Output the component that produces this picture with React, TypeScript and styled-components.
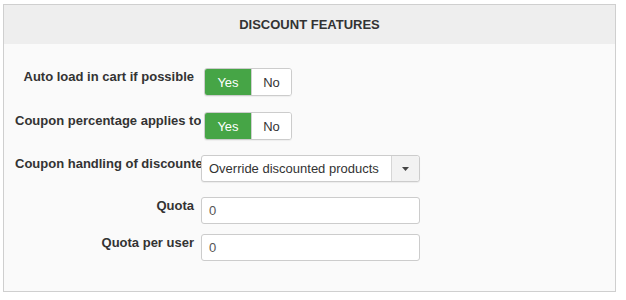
import React from "react";
import styled, { createGlobalStyle } from "styled-components";

const GlobalStyle = createGlobalStyle`
  html, body {
    margin: 0;
    padding: 0;
    background: #ffffff;
  }
  body {
    font-family: "Liberation Sans", Arial, sans-serif;
    font-size: 13px;
    color: #333333;
  }
`;

type Field =
  | { kind: "toggle"; label: string; value: boolean; gap: number }
  | { kind: "select"; label: string; value: string; gap: number }
  | { kind: "input"; label: string; value: string; gap: number };

const fields: Field[] = [
  { kind: "toggle", label: "Auto load in cart if possible", value: true, gap: 16 },
  { kind: "toggle", label: "Coupon percentage applies to", value: true, gap: 15 },
  { kind: "select", label: "Coupon handling of discounted products", value: "Override discounted products", gap: 15 },
  { kind: "input", label: "Quota", value: "0", gap: 10 },
  { kind: "input", label: "Quota per user", value: "0", gap: 0 }
];

const Toggle = ({ value }: { value: boolean }) => (
  <ToggleGroup>
    <ToggleBtn active={value} variant="yes">Yes</ToggleBtn>
    <ToggleBtn active={!value} variant="no">No</ToggleBtn>
  </ToggleGroup>
);

const Select = ({ value }: { value: string }) => (
  <SelectBox>
    <SelectText>{value}</SelectText>
    <SelectCaret>
      <svg width="7" height="4" viewBox="0 0 7 4">
        <path d="M0 0 L7 0 L3.5 4 Z" fill="#444" />
      </svg>
    </SelectCaret>
  </SelectBox>
);

export default function App() {
  return (
    <>
      <GlobalStyle />
      <Panel>
        <Header>DISCOUNT FEATURES</Header>
        <Body>
          {fields.map(f => (
            <Row key={f.label} gap={f.gap}>
              <Label>{f.label}</Label>
              {f.kind === "toggle" ? (
                <Toggle value={f.value} />
              ) : f.kind === "select" ? (
                <Select value={f.value} />
              ) : (
                <TextInput>{f.value}</TextInput>
              )}
            </Row>
          ))}
        </Body>
      </Panel>
    </>
  );
}

const Panel = styled.div`
  box-sizing: border-box;
  width: 613px;
  height: 288px;
  margin: 4px 0 0 3px;
  border: 1px solid #cfcfcf;
  background: #fafafa;
  display: flex;
  flex-direction: column;
`;

const Header = styled.div`
  height: 39px;
  background: #eeeeee;
  display: flex;
  align-items: center;
  justify-content: center;
  font-weight: bold;
  font-size: 13px;
  color: #333333;
`;

const Body = styled.div`
  padding: 24px 0 0 11px;
  display: flex;
  flex-direction: column;
`;

const Row = styled.div<{ gap: number }>`
  display: grid;
  grid-template-columns: 186px 1fr;
  align-items: start;
  margin-bottom: ${p => p.gap}px;
`;

const Label = styled.div`
  box-sizing: border-box;
  width: 186px;
  padding: 1px 7px 0 0;
  text-align: right;
  white-space: nowrap;
  overflow: hidden;
  font-weight: bold;
  line-height: 16px;
  color: #333333;
`;

const ToggleGroup = styled.div`
  display: flex;
  width: 88px;
  height: 28px;
  margin-left: 3px;
  border: 1px solid #cccccc;
  border-radius: 3px;
  box-sizing: border-box;
  overflow: hidden;
  box-shadow: 0 1px 1px rgba(0, 0, 0, 0.05);
`;

const ToggleBtn = styled.div<{ active: boolean; variant: "yes" | "no" }>`
  flex: ${p => (p.variant === "yes" ? "0 0 46px" : "1")};
  display: flex;
  align-items: center;
  justify-content: center;
  font-size: 13px;
  background: ${p => (p.active ? (p.variant === "yes" ? "#46a546" : "#bd362f") : "#ffffff")};
  color: ${p => (p.active ? "#ffffff" : "#333333")};
  border-right: ${p => (p.variant === "yes" ? "1px solid #d0d0d0" : "none")};
`;

const SelectBox = styled.div`
  box-sizing: border-box;
  width: 219px;
  height: 27px;
  border: 1px solid #cccccc;
  border-radius: 3px;
  background: #ffffff;
  display: flex;
  align-items: stretch;
  box-shadow: 0 1px 1px rgba(0, 0, 0, 0.06);
`;

const SelectText = styled.div`
  flex: 1;
  display: flex;
  align-items: center;
  padding-left: 7px;
  font-size: 13px;
  color: #333333;
  white-space: nowrap;
  overflow: hidden;
`;

const SelectCaret = styled.div`
  width: 27px;
  display: flex;
  align-items: center;
  justify-content: center;
  background: #f2f2f2;
  border-left: 1px solid #d6d6d6;
  border-radius: 0 3px 3px 0;
`;

const TextInput = styled.div`
  box-sizing: border-box;
  width: 219px;
  height: 27px;
  border: 1px solid #cccccc;
  border-radius: 3px;
  background: #ffffff;
  display: flex;
  align-items: center;
  padding-left: 7px;
  font-size: 13px;
  color: #555555;
`;
